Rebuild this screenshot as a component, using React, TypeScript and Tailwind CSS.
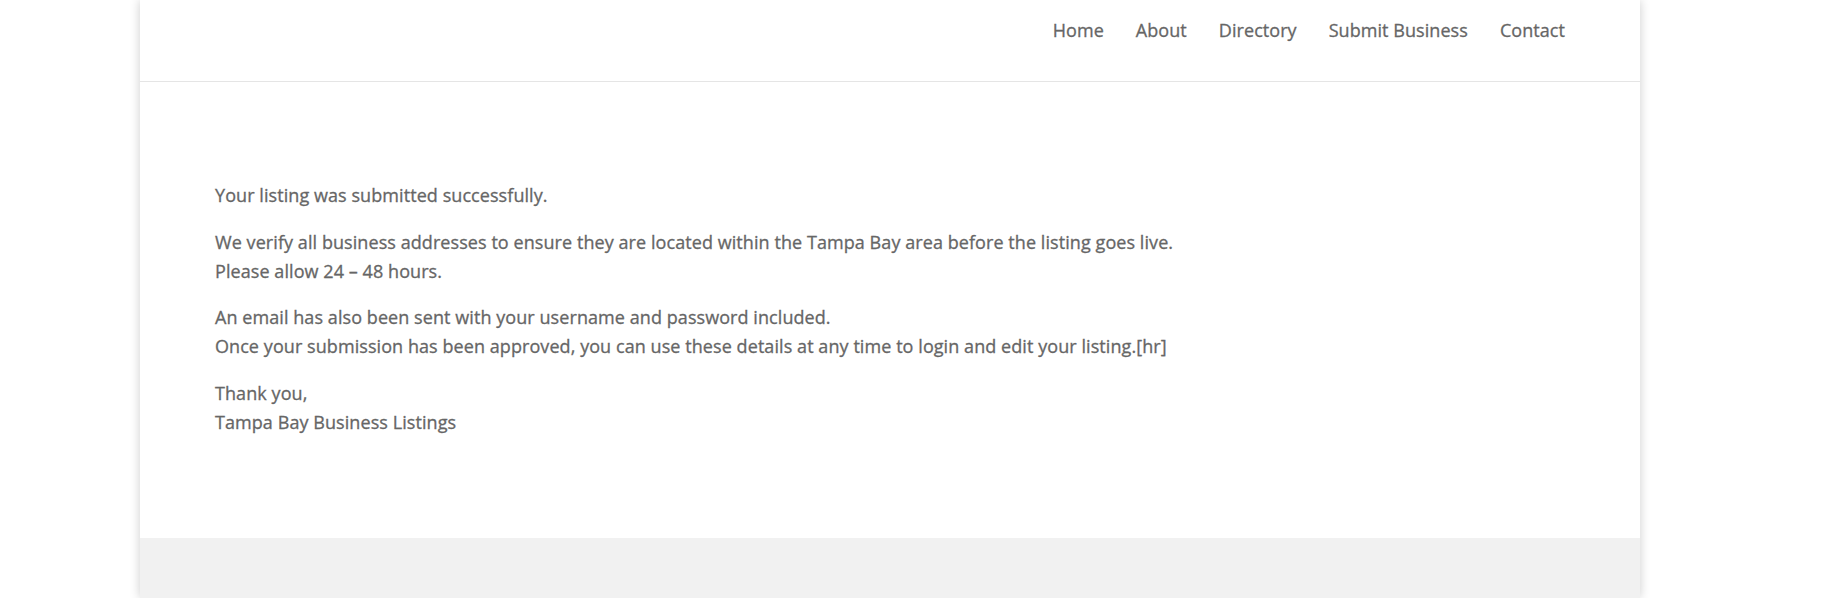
import React from "react";

const navItems = ["Home", "About", "Directory", "Submit Business", "Contact"];

export default function App() {
  return (
    <div
      className="min-h-[598px] w-full bg-white overflow-hidden"
      style={{ fontFamily: '"Open Sans", "Liberation Sans", sans-serif' }}
    >
      <div className="ml-[140px] w-[1500px] min-h-[598px] bg-white shadow-[0_0_10px_rgba(0,0,0,0.2)] flex flex-col">
        <header className="h-[81px] shadow-[0_1px_0_rgba(0,0,0,0.1)] flex justify-end items-start pr-[75px] pt-[18px]">
          <nav className="flex gap-[32px] text-[18px] font-medium text-[#666] leading-[24px] tracking-[0.06px] [-webkit-text-stroke:0.3px_#666]">
            {navItems.map((n) => (
              <a key={n} href="#" className="block">
                {n}
              </a>
            ))}
          </nav>
        </header>
        <main className="h-[457px] pl-[75px] pt-[100px] text-[18px] leading-[28.8px] font-medium text-[#666] tracking-[0.07px] [-webkit-text-stroke:0.3px_#666]">
          <p className="mb-[18px]">Your listing was submitted successfully.</p>
          <p className="mb-[18px]">
            We verify all business addresses to ensure they are located within the Tampa Bay area before the listing goes live.
            <br />
            Please allow 24 – 48 hours.
          </p>
          <p className="mb-[18px]">
            An email has also been sent with your username and password included.
            <br />
            Once your submission has been approved, you can use these details at any time to login and edit your listing.[hr]
          </p>
          <p>
            Thank you,
            <br />
            Tampa Bay Business Listings
          </p>
        </main>
        <footer className="flex-1 bg-[#f1f1f1]" />
      </div>
    </div>
  );
}
